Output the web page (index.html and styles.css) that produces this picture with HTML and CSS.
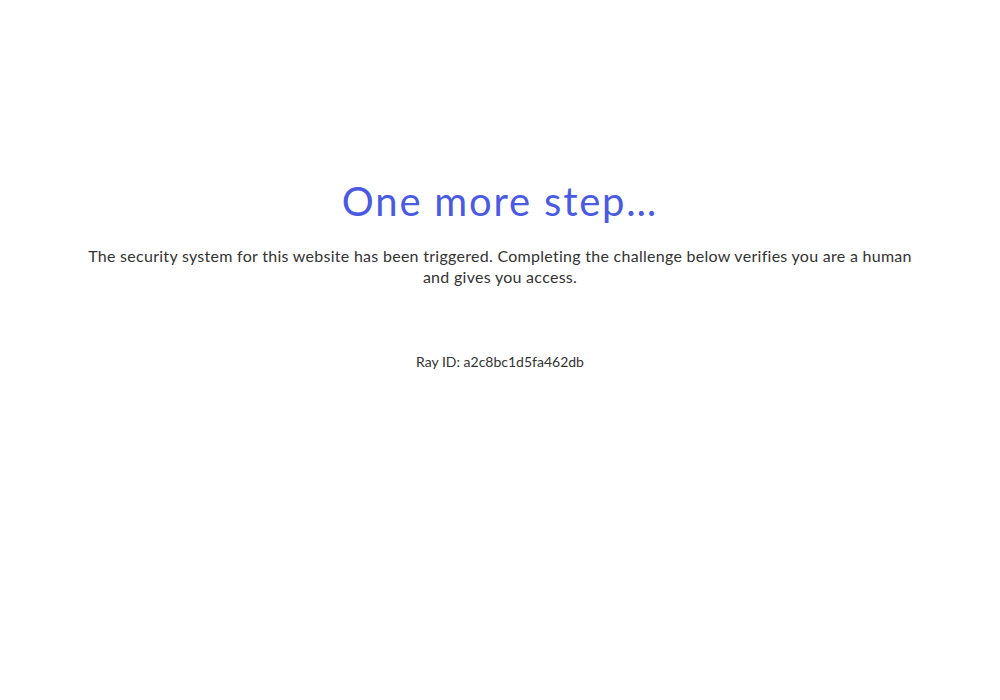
FILE: index.html
```html
<!DOCTYPE html>
<html lang="en">
<head>
<meta charset="utf-8">
<title>One more step...</title>
<link rel="stylesheet" href="styles.css">
</head>
<body>
<main class="page">
  <h1 class="title">One more step…</h1>
  <p class="lead">The security system for this website has been triggered. Completing the challenge below verifies you are a human and gives you access.</p>
  <p class="ray">Ray ID: a2c8bc1d5fa462db</p>
</main>
</body>
</html>
```
FILE: styles.css
```css
html, body {
  margin: 0;
  padding: 0;
  background: #ffffff;
}
body {
  font-family: "Lato", "Open Sans", sans-serif;
  color: #333333;
}
.page {
  display: flex;
  flex-direction: column;
  align-items: center;
  padding: 175px 80px 0;
  text-align: center;
}
.title {
  margin: 0;
  font-size: 40px;
  font-weight: 400;
  line-height: 52px;
  color: #4a5ae3;
  letter-spacing: 1.8px;
}
.lead {
  margin: 18px 0 0;
  font-size: 16px;
  line-height: 21px;
  letter-spacing: 0.28px;
  max-width: 840px;
}
.ray {
  margin: 66px 0 0;
  font-size: 14px;
  line-height: 18px;
}
```
